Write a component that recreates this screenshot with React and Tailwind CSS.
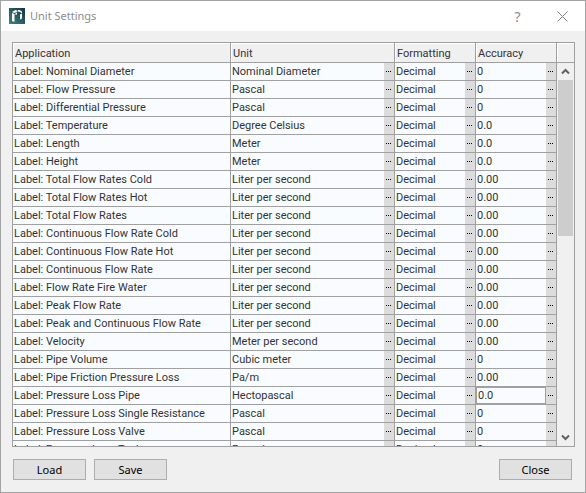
import React from "react";

const rows = [
  ["Nominal Diameter", "Nominal Diameter", "0"],
  ["Flow Pressure", "Pascal", "0"],
  ["Differential Pressure", "Pascal", "0"],
  ["Temperature", "Degree Celsius", "0.0"],
  ["Length", "Meter", "0.0"],
  ["Height", "Meter", "0.0"],
  ["Total Flow Rates Cold", "Liter per second", "0.00"],
  ["Total Flow Rates Hot", "Liter per second", "0.00"],
  ["Total Flow Rates", "Liter per second", "0.00"],
  ["Continuous Flow Rate Cold", "Liter per second", "0.00"],
  ["Continuous Flow Rate Hot", "Liter per second", "0.00"],
  ["Continuous Flow Rate", "Liter per second", "0.00"],
  ["Flow Rate Fire Water", "Liter per second", "0.00"],
  ["Peak Flow Rate", "Liter per second", "0.00"],
  ["Peak and Continuous Flow Rate", "Liter per second", "0.00"],
  ["Velocity", "Meter per second", "0.00"],
  ["Pipe Volume", "Cubic meter", "0"],
  ["Pipe Friction Pressure Loss", "Pa/m", "0.00"],
  ["Pressure Loss Pipe", "Hectopascal", "0.0"],
  ["Pressure Loss Single Resistance", "Pascal", "0"],
  ["Pressure Loss Valve", "Pascal", "0"],
  ["Pressure Loss Tank", "Pascal", "0"],
];
const editedRow = 18;

function PickerCell({ name, children }) {
  return (
    <td className="border-r border-b border-[#a0a0a0] p-0">
      <div className="flex h-[17px]">
        <div className="min-w-0 flex-1">{children}</div>
        <button
          type="button"
          aria-label={`Choose ${name}`}
          className="flex h-[17px] w-[10px] shrink-0 items-center bg-[#dcdcdc] pl-[2px]"
        >
          <svg width="5" height="1" shapeRendering="crispEdges" aria-hidden="true">
            <path d="M0 0h1v1H0zM2 0h1v1H2zM4 0h1v1H4z" fill="#000" />
          </svg>
        </button>
      </div>
    </td>
  );
}

function HeaderCell({ children }) {
  return (
    <th scope="col" className="h-[20px] border-r border-b border-[#a0a0a0] bg-[#f0f0f0] p-0 text-left font-normal">
      <div className="h-[19px] border-t border-l border-white pl-px leading-[19px]">{children}</div>
    </th>
  );
}

function DialogButton({ children }) {
  return (
    <button
      type="button"
      className="h-[21px] w-[73px] border border-[#adadad] bg-[#e1e1e1] text-center font-['Noto_Sans',sans-serif] text-[11px] leading-[19px] text-black"
    >
      {children}
    </button>
  );
}

function Scrollbar() {
  return (
    <div className="flex w-[17px] shrink-0 flex-col bg-[#f0f0f0]">
      <div className="h-[20px] shrink-0 border-b border-[#a0a0a0]">
        <div className="h-full border-t border-l border-white" />
      </div>
      <button type="button" aria-label="Scroll up" className="flex h-[17px] shrink-0 items-center justify-center">
        <svg width="9" height="7" viewBox="0 0 9 7" aria-hidden="true">
          <path d="M1 5.500 4.500 2 8 5.500" fill="none" stroke="#606060" strokeWidth="2" />
        </svg>
      </button>
      <div className="mx-px h-[156px] bg-[#cdcdcd]" />
      <div className="flex-1" />
      <button type="button" aria-label="Scroll down" className="flex h-[17px] shrink-0 items-center justify-center">
        <svg width="9" height="7" viewBox="0 0 9 7" aria-hidden="true">
          <path d="M1 1.500 4.500 5 8 1.500" fill="none" stroke="#606060" strokeWidth="2" />
        </svg>
      </button>
    </div>
  );
}

export default function App() {
  return (
    <main className="min-h-screen w-full border border-[#a3a3a3] bg-[#f0f0f0] font-[Roboto,sans-serif] text-[11px] text-[#333]">
      <header className="flex h-[30px] items-center bg-white pl-2">
        <svg width="16" height="16" viewBox="0 0 16 16" aria-hidden="true">
          <defs>
            <linearGradient id="logo" x1="0" y1="1" x2="1" y2="0">
              <stop offset="0" stopColor="#3d8583" />
              <stop offset="1" stopColor="#153541" />
            </linearGradient>
          </defs>
          <rect width="16" height="16" fill="url(#logo)" />
          <path d="M3 5l2.500 1v8L3 13zM3 4l3.500-2L9 3 5.500 5zM9 2h1.500L13 3.500v2l-2-1.500-2-.5zM6.500 5 8 4.500v2L6.500 7zM11 6.500l2-1v5l-2 1z" fill="#fff" />
        </svg>
        <h1 className="ml-[5px] flex-1 font-['Noto_Sans',sans-serif] text-[11px] text-[#8c8c8c]">Unit Settings</h1>
        <button type="button" aria-label="Help" className="w-[45px] text-center font-['Noto_Sans',sans-serif] text-[14px] text-[#8c8c8c]">
          ?
        </button>
        <button type="button" aria-label="Close window" className="flex w-[45px] justify-center">
          <svg width="11" height="11" viewBox="0 0 11 11" aria-hidden="true">
            <path d="M.5.5l10 10M10.500.5l-10 10" stroke="#808080" fill="none" />
          </svg>
        </button>
      </header>
      <div className="pt-[11px] pr-[10px] pl-[11px]">
        <div className="flex h-[405px] overflow-hidden border border-[#a0a0a0]">
          <div className="min-w-0 flex-1 overflow-hidden">
            <table className="w-full table-fixed border-separate border-spacing-0">
              <colgroup>
                <col />
                <col className="w-[164px]" />
                <col className="w-[81px]" />
                <col className="w-[81px]" />
              </colgroup>
              <thead>
                <tr>
                  <HeaderCell>Application</HeaderCell>
                  <HeaderCell>Unit</HeaderCell>
                  <HeaderCell>Formatting</HeaderCell>
                  <HeaderCell>Accuracy</HeaderCell>
                </tr>
              </thead>
              <tbody className="bg-[#f8fcff] whitespace-nowrap">
                {rows.map(([label, unit, accuracy], i) => (
                  <tr key={label}>
                    <td className="border-r border-b border-[#a0a0a0] p-0">
                      <div className="h-[17px] pl-px leading-[17px]">Label: {label}</div>
                    </td>
                    <PickerCell name={`unit for ${label}`}>
                      <div className="h-[17px] pl-px leading-[17px]">{unit}</div>
                    </PickerCell>
                    <PickerCell name={`formatting for ${label}`}>
                      <div className="h-[17px] pl-px leading-[17px]">Decimal</div>
                    </PickerCell>
                    <PickerCell name={`accuracy for ${label}`}>
                      {i === editedRow ? (
                        <input
                          type="text"
                          aria-label={`Accuracy for ${label}`}
                          defaultValue={accuracy}
                          className="block h-[17px] w-full border border-[#a0a0a0] bg-[#f8fcff] pl-px outline-none"
                        />
                      ) : (
                        <div className="h-[17px] pl-px leading-[17px]">{accuracy}</div>
                      )}
                    </PickerCell>
                  </tr>
                ))}
              </tbody>
            </table>
          </div>
          <Scrollbar />
        </div>
      </div>
      <footer className="flex gap-2 py-3 pr-[13px] pl-3">
        <DialogButton>Load</DialogButton>
        <DialogButton>Save</DialogButton>
        <div className="flex-1" />
        <DialogButton>Close</DialogButton>
      </footer>
    </main>
  );
}
